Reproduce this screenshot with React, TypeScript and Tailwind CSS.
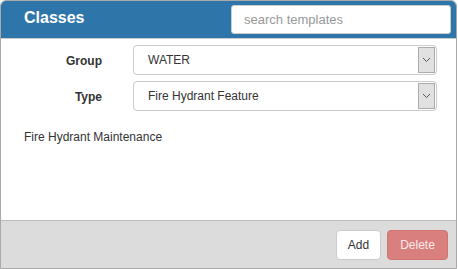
function SelectRow({ label, value }: { label: string; value: string }) {
  return (
    <div className="flex items-center h-[30px]">
      <div className="w-[101px] pt-[2px] text-right text-[12px] font-bold text-[#333]">{label}</div>
      <div className="ml-[31px] flex h-full w-[304px] items-stretch rounded-[4px] border border-[#ccc] bg-white">
        <div className="flex flex-1 items-center pl-[14px] text-[12px] text-[#333]">{value}</div>
        <div className="my-[1px] mr-[1px] flex w-[17px] items-center justify-center border border-[#aaa] bg-[#e1e1e1]">
          <svg width="9" height="6" viewBox="0 0 9 6" fill="none">
            <polyline points="1,1 4.5,4.5 8,1" stroke="#555" strokeWidth="1" />
          </svg>
        </div>
      </div>
    </div>
  );
}

export default function App() {
  return (
    <div className="h-[269px] w-[458px] [font-family:'Liberation_Sans',Arial,sans-serif]">
      <div className="flex h-full w-[457px] flex-col overflow-hidden rounded-t-[6px] border border-[#aaa] bg-white">
        {/* header */}
        <div className="flex h-[38px] items-center justify-between border-b border-[#ccc] bg-[#2e75aa] pl-[23px] pr-[5px]">
          <span className="pb-[3px] text-[16px] font-bold text-white">Classes</span>
          <input
            className="h-[29px] w-[220px] rounded-[3px] border border-[#ccc] bg-white px-[12px] text-[13px] text-[#333] outline-none placeholder:text-[#999]"
            placeholder="search templates"
          />
        </div>

        {/* body */}
        <div className="flex flex-1 flex-col pt-[6px]">
          <div className="flex flex-col gap-[6px]">
            <SelectRow label="Group" value="WATER" />
            <SelectRow label="Type" value="Fire Hydrant Feature" />
          </div>
          <div className="mt-[17px] pl-[23px] text-[12px] text-[#333]">Fire Hydrant Maintenance</div>
        </div>

        {/* footer */}
        <div className="flex h-[48px] items-center justify-end gap-[6px] border-t border-[#bbb] bg-[#dcdcdc] pr-[8px]">
          <button className="h-[30px] w-[45px] rounded-[4px] border border-[#ccc] bg-white text-[12px] text-[#333]">
            Add
          </button>
          <button className="h-[30px] w-[61px] rounded-[4px] border border-[#d27370] bg-[#d9807e] text-[12px] text-[#fbeaea]">
            Delete
          </button>
        </div>
      </div>
    </div>
  );
}
